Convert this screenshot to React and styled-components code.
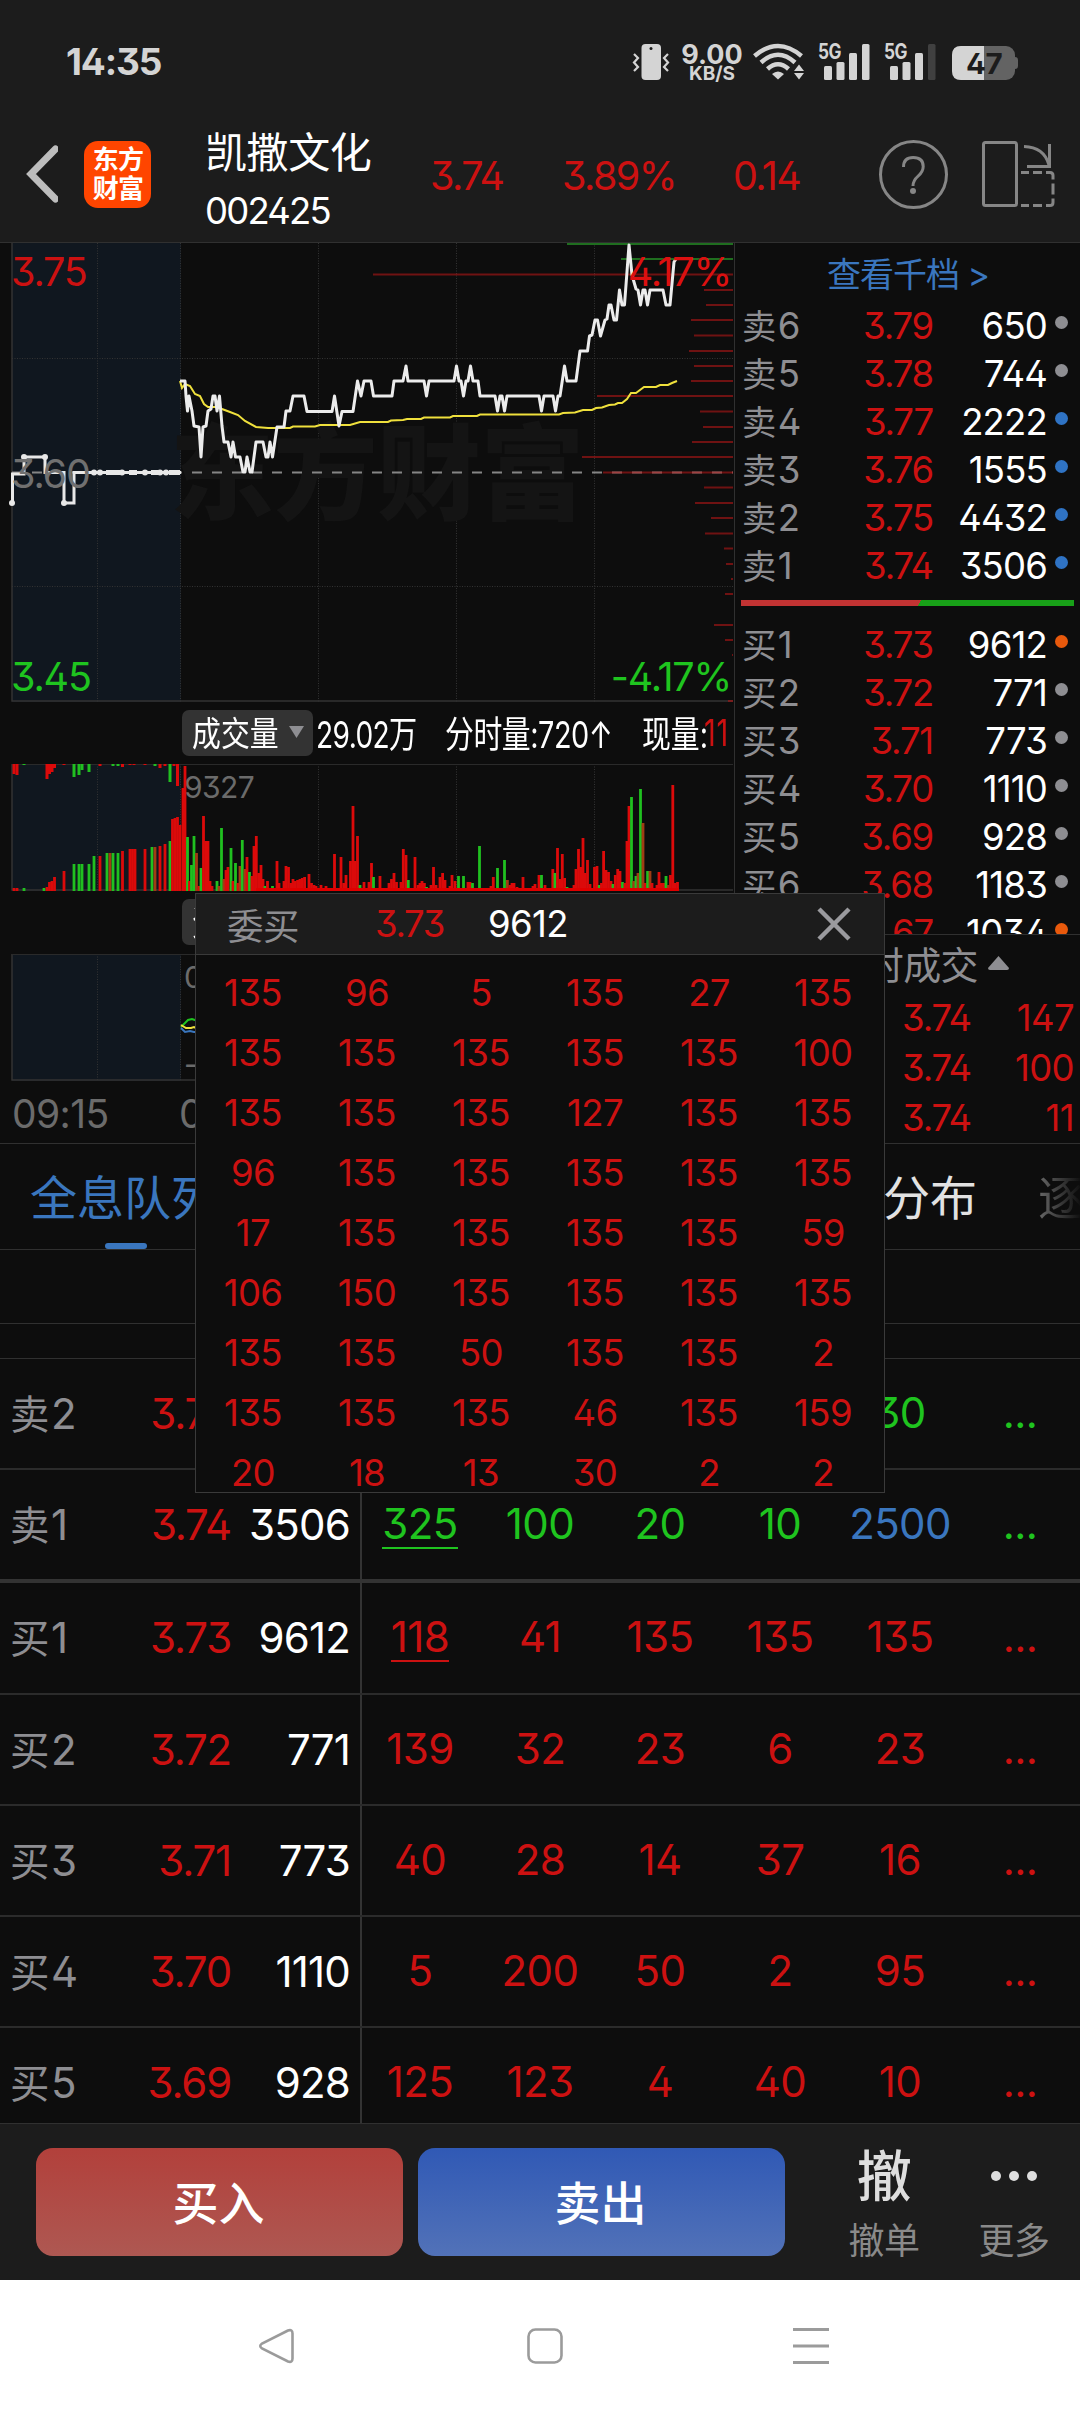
import styled, { createGlobalStyle } from 'styled-components';

const RED = '#cc1111';
const GREEN = '#1fc41f';
const BLUE = '#3a76be';
const GREY = '#8e8e92';
const LINE = '#303030';
const PANEL = '#1c1c1c';

const GlobalStyle = createGlobalStyle`
  * {
    box-sizing: border-box;
  }

  body {
    margin: 0;
    background: #0d0d0d;
    color: #fff;
    font-family: Inter, "Noto Sans CJK SC", sans-serif;
    font-weight: 370;
    font-feature-settings: "cv02", "cv09";
    letter-spacing: -0.6px;
    white-space: nowrap;
  }

  svg {
    display: block;
    flex: none;
  }
`

const Screen = styled.div`
  position: relative;
  width: 1080px;
  height: 2412px;
  overflow: hidden;
  display: flex;
  flex-direction: column;
`

/* status bar */

const StatusBar = styled.div`
  display: flex;
  align-items: center;
  height: 124px;
  padding: 0 61px 0 66px;
  background: ${PANEL};
`

const Clock = styled.span`
  margin-right: auto;
  color: #d4d4d4;
  font-size: 37px;
  font-weight: 650;
  letter-spacing: -0.03em;
`

const NetSpeed = styled.div`
  width: 62px;
  margin: 2px 10px 0 11px;
  color: #d4d4d4;
  font-weight: 650;
  font-size: 27px;
  line-height: 21px;
  text-align: center;
  letter-spacing: 0;
  font-feature-settings: normal;
`

const SpeedUnit = styled.div`
  font-size: 19px;
  line-height: 17px;
`

/* header */

const Header = styled.div`
  display: flex;
  align-items: center;
  height: 119px;
  padding: 0 0 17px 24px;
  background: ${PANEL};
  border-bottom: 1px solid ${LINE};
`

const Logo = styled.div`
  width: 67px;
  height: 67px;
  margin: 0 54px 0 26px;
  padding: 4px 0 0 1px;
  border-radius: 14px;
  background: #ff4500;
  font-size: 26px;
  font-weight: 700;
  line-height: 29px;
  text-align: center;
  letter-spacing: -0.03em;
`

const StockName = styled.div`
  align-self: flex-start;
  width: 225px;
  height: 102px;
  padding-top: 6px;
  font-size: 42px;
  line-height: 46px;
  letter-spacing: -0.01em;
`

const StockCode = styled.div`
  font-size: 36.5px;
  line-height: 66px;
  margin-top: 2px;
  letter-spacing: -0.05em;
`

const Quote = styled.span`
  width: ${props => props.$width}px;
  margin-top: 4px;
  color: ${RED};
  font-size: 39.5px;
  letter-spacing: -1.6px;
`

/* upper half */

const Market = styled.div`
  display: flex;
  height: 901px;
  border-bottom: 1px solid ${LINE};
`

const Charts = styled.div`
  width: 735px;
  border-right: 1px solid ${LINE};
`

const IndicatorBar = styled.div`
  display: flex;
  align-items: center;
  height: ${props => props.$height}px;
  padding-left: 182px;
`

const Picker = styled.div`
  display: flex;
  align-items: center;
  width: 131px;
  height: 46px;
  padding: 0 0 2px 10px;
  margin-right: 3px;
  border-radius: 7px;
  background: #333;
  overflow: hidden;
`

const Narrow = styled.span`
  flex: none;
  width: ${props => props.$width}px;
  margin-top: -1px;
  color: ${props => props.$color || '#fff'};
  font-size: ${props => props.$size || 37}px;
  letter-spacing: ${props => props.$spacing || 0}px;
  transform: scaleX(${props => props.$scale});
  transform-origin: left center;
`

const TimeAxis = styled.div`
  display: flex;
  align-items: center;
  height: 65px;
  padding-left: 12px;
  color: #6b6b6b;
  font-size: 39px;
`

const TimeMark = styled.span`
  width: 167px;
`

const Book = styled.div`
  flex: 1;
  display: flex;
  flex-direction: column;
`

const Levels = styled.div`
  flex: none;
  height: 692px;
  overflow: hidden;
  border-bottom: 1px solid ${LINE};
`

const MoreLevels = styled.div`
  height: 59px;
  padding-top: 2px;
  padding-left: 92px;
  color: ${BLUE};
  font-size: 34px;
  line-height: 60px;
  letter-spacing: -0.03em;
`

const LevelRow = styled.div`
  display: grid;
  grid-template-columns: 90px 101px 114px 1fr;
  align-items: center;
  height: 48px;
  padding-left: 7px;
  font-size: 36.5px;
`

const LevelName = styled.span`
  margin-top: -3px;
  color: ${GREY};
`

const Cjk = styled.span`
  margin-right: 2px;
  font-size: 0.94em;
`

const Price = styled.span`
  color: ${RED};
  text-align: right;
  letter-spacing: -1.2px;
`

const Amount = styled.span`
  text-align: right;
  letter-spacing: -0.8px;
`

const Dot = styled.i`
  width: 13px;
  height: 13px;
  margin: -6px 0 0 8px;
  border-radius: 50%;
  background: ${props => props.$color};
`

const Ratio = styled.div`
  height: 6px;
  margin: 10px 6px 15px;
  background: linear-gradient(120deg, #c23333 53.5%, #18a018 53.6%);
`

const TradesHead = styled.div`
  display: flex;
  align-items: center;
  justify-content: flex-end;
  gap: 10px;
  height: 59px;
  padding: 0 71px 2px 0;
  color: ${GREY};
  font-size: 38px;
`

const TradeRow = styled.div`
  display: grid;
  grid-template-columns: 236px 1fr;
  align-items: center;
  height: 51px;
  padding-right: 6px;
  color: ${RED};
  font-size: 36.5px;
  text-align: right;
`

/* queue table */

const Tabs = styled.div`
  display: flex;
  align-items: center;
  height: 106px;
  padding-left: 30px;
  border-bottom: 1px solid ${LINE};
  font-size: 47px;
  letter-spacing: 0;
  overflow: hidden;
`

const Tab = styled.div`
  position: relative;
  line-height: 113px;
  padding-top: 2px;
  color: ${props => (props.$active ? BLUE : '#e2e2e2')};
  margin-left: ${props => (props.$push ? 'auto' : 0)};

  &::after {
    content: '';
    display: ${props => (props.$active ? 'block' : 'none')};
    position: absolute;
    left: 75px;
    bottom: 5px;
    width: 42px;
    height: 6px;
    border-radius: 3px;
    background: ${BLUE};
  }
`

const FadedTab = styled.div`
  width: 42px;
  margin-left: 61px;
  padding-top: 2px;
  line-height: 113px;
  overflow: hidden;
  background: linear-gradient(90deg, #686868, #111);
  background-clip: text;
  color: transparent;
`

const Spacer = styled.div`
  height: ${props => props.$height}px;
  border-bottom: 1px solid ${LINE};
`

const QueueTable = styled.div`
  height: 765px;
  overflow: hidden;
`

const QueueRow = styled.div`
  display: grid;
  grid-template-columns: 100px 131px 119px 12px repeat(6, 120px);
  align-items: center;
  height: ${props => (props.$last ? 113.4 : 111.2)}px;
  border-bottom: ${props => (props.$last ? 4 : 2)}px solid ${props => (props.$last ? '#333' : '#2b2b2b')};
  font-size: 42px;
`

const QueueName = styled.span`
  margin-top: -4px;
  padding-left: 10px;
  color: ${GREY};
  font-size: 42px;
`

const Divider = styled.i`
  height: 100%;
  border-right: 2px solid #333;
`

const QueueCell = styled.span`
  justify-self: center;
  margin: 1px 4px 0 0;
  line-height: 46px;
  color: ${props => props.$color};
  border-bottom: 2px solid ${props => (props.$marked ? props.$color : 'transparent')};
`

/* order popup */

const Popup = styled.div`
  position: absolute;
  left: 195px;
  top: 893px;
  width: 690px;
  height: 600px;
  border: 1px solid #3a3a3a;
  background: #0d0d0d;
`

const PopupHead = styled.div`
  display: flex;
  align-items: center;
  height: 61px;
  padding: 0 33px 0 31px;
  background: ${PANEL};
  border-bottom: 1px solid #3a3a3a;
  font-size: 36.5px;
`

const PopupTitle = styled.span`
  width: 148px;
  color: ${GREY};
`

const PopupPrice = styled.span`
  width: 113px;
  color: ${RED};
  letter-spacing: -1.4px;
`

const PopupAmount = styled.span`
  margin-right: auto;
`

const Orders = styled.div`
  display: grid;
  grid-template-columns: repeat(6, 114px);
  grid-auto-rows: 60px;
  align-items: center;
  padding-top: 8px;
  color: ${RED};
  font-size: 36.5px;
  text-align: center;
`

/* bottom */

const ActionBar = styled.div`
  display: flex;
  align-items: center;
  height: 157px;
  padding-left: 36px;
  border-top: 1px solid ${LINE};
  background: ${PANEL};
`

const TradeButton = styled.button`
  width: 367px;
  height: 108px;
  margin: 0 15px 0 0;
  padding: 0 2px 5px 0;
  border: 0;
  border-radius: 17px;
  background: linear-gradient(${props => props.$from}, ${props => props.$to});
  color: #fff;
  font: 500 46px "Noto Sans CJK SC", sans-serif;
`

const Action = styled.div`
  display: flex;
  flex-direction: column;
  align-items: center;
  width: 130px;
  height: 120px;
  margin-left: ${props => props.$offset || 0}px;
  color: #8a8a8a;
  font-size: 36px;
  line-height: 66px;
`

const ActionIcon = styled.div`
  flex: none;
  display: flex;
  align-items: center;
  height: 66px;
  padding-top: 2px;
  color: #dedede;
  font-size: 55px;
  font-weight: 500;
`

const NavBar = styled.div`
  display: flex;
  align-items: center;
  height: 132px;
  padding-left: 257px;
  background: #fff;
`

const preTop = [
  [14, 10, 'r'], [17, 11, 'r'], [24, 1, 'g'], [47, 15, 'r'], [49.5, 10, 'r'], [52, 8, 'r'], [54.5, 4, 'r'], [64, 1, 'r'],
  [74, 13, 'g'], [79, 11, 'g'], [82, 6, 'g'], [89, 8, 'g'], [100, 2, 'r'], [113, 2, 'g'], [118, 2, 'g'], [122.5, 3, 'r'],
  [130, 1, 'r'], [134, 1, 'r'], [145, 1, 'r'], [155, 2, 'g'], [160, 4, 'r'], [165, 2, 'r'], [170, 18, 'g'], [174, 2, 'r'], [177.5, 22, 'r'],
];

const preBottom = [
  [14, 3, 'r'], [17, 3, 'r'], [24, 3, 'g'], [44, 3, 'g'], [47, 4, 'r'], [49.5, 9, 'r'], [52, 10, 'r'], [54.5, 14, 'r'], [64, 20, 'r'],
  [74, 27, 'g'], [79, 27, 'g'], [82, 27, 'g'], [89, 27, 'g'], [94, 35, 'g'], [100, 35, 'r'], [107, 38, 'g'], [110, 38, 'm'],
  [113, 38, 'g'], [118, 38, 'g'], [122.5, 40, 'r'], [130, 42, 'r'], [132.5, 42, 'r'], [135, 42, 'r'], [145, 42, 'r'], [152, 44, 'g'],
  [155, 44, 'm'], [160, 45, 'r'], [165, 47, 'r'], [170, 50, 'g'], [172.5, 72, 'r'], [175, 73, 'r'], [177.5, 74, 'r'], [180, 66, 'r'],
];

const volume = [
  [183, 103, 'r'], [185, 125, 'r'], [187.5, 54, 'g'], [189.5, 10, 'r'], [191.5, 26, 'g'], [194, 55, 'g'], [196.5, 38, 'm'], [199, 5, 'r'],
  [201, 23, 'g'], [203.5, 75, 'r'], [205.7, 50, 'r'], [208, 50, 'r'], [210, 10, 'r'], [212, 5, 'r'], [217, 10, 'g'], [219, 5, 'm'],
  [221.5, 63, 'g'], [224, 12, 'm'], [226, 21, 'r'], [228, 24, 'r'], [231, 43, 'g'], [233, 10, 'r'], [235.5, 28, 'g'], [238, 8, 'r'],
  [240, 25, 'm'], [242.3, 51, 'g'], [245, 22, 'm'], [247, 34, 'r'], [249.5, 19, 'g'], [252, 15, 'r'], [254, 45, 'r'], [256.3, 55, 'r'],
  [258.6, 18, 'r'], [261, 26, 'r'], [263, 12, 'r'], [265, 5, 'g'], [267.5, 10, 'r'], [272.5, 5, 'g'], [277, 30, 'r'], [279, 8, 'r'],
  [284, 10, 'r'], [286, 25, 'r'], [288.5, 24, 'r'], [291, 8, 'r'], [293, 12, 'r'], [295.3, 10, 'r'], [297.6, 11, 'r'], [300, 12, 'r'],
  [302.3, 13, 'r'], [304.6, 14, 'r'], [307, 3, 'g'], [309, 17, 'r'], [311.5, 8, 'r'], [314, 6, 'r'], [316, 5, 'r'], [321, 6, 'r'],
  [326, 5, 'r'], [334.5, 37, 'r'], [337.5, 3, 'g'], [341, 34, 'r'], [343.7, 8, 'r'], [346, 16, 'r'], [350.5, 30, 'r'], [353, 85, 'r'],
  [355, 30, 'r'], [357.5, 55, 'r'], [360, 6, 'g'], [364, 9, 'r'], [369, 9, 'r'], [371.5, 28, 'r'], [373.5, 14, 'g'], [380, 15, 'r'],
  [389, 8, 'r'], [391.5, 12, 'r'], [394, 18, 'r'], [396.5, 9, 'r'], [401, 9, 'r'], [403.3, 42, 'r'], [406, 36, 'r'], [408.3, 11, 'g'],
  [415, 34, 'r'], [418, 6, 'r'], [420, 8, 'r'], [422, 10, 'r'], [424.4, 8, 'r'], [426.5, 4, 'g'], [431, 6, 'r'], [433.5, 24, 'r'],
  [436, 6, 'r'], [440, 14, 'r'], [442.6, 18, 'r'], [445, 11, 'r'], [450, 5, 'r'], [452, 16, 'r'], [455, 10, 'r'], [458.5, 15, 'g'],
  [463.5, 15, 'g'], [468, 9, 'r'], [470, 9, 'r'], [472.5, 8, 'g'], [479.5, 45, 'g'], [491, 5, 'r'], [493.3, 14, 'r'], [497.5, 23, 'g'],
  [504.5, 31, 'g'], [507.4, 11, 'm'], [510, 6, 'r'], [512, 8, 'r'], [514, 8, 'r'], [517, 4, 'r'], [523, 14, 'r'], [533, 5, 'r'],
  [535, 7, 'r'], [539, 16, 'r'], [541.5, 16, 'g'], [545, 6, 'r'], [552.8, 22, 'r'], [555, 18, 'g'], [557.5, 43, 'r'], [560, 12, 'r'],
  [562.3, 37, 'r'], [564.6, 13, 'r'], [567, 4, 'g'], [574, 6, 'r'], [576, 22, 'r'], [578.5, 42, 'r'], [580.8, 24, 'r'], [583, 53, 'r'],
  [585, 18, 'r'], [587.5, 31, 'r'], [590, 7, 'r'], [594.5, 24, 'r'], [597, 25, 'r'], [599.3, 6, 'g'], [601.5, 8, 'r'], [603.6, 40, 'r'],
  [606, 21, 'r'], [608.5, 19, 'r'], [611, 10, 'r'], [613, 7, 'g'], [615.3, 16, 'r'], [617.7, 22, 'r'], [620, 20, 'r'], [622.5, 9, 'g'],
  [625, 8, 'r'], [627, 50, 'r'], [629, 85, 'r'], [631.5, 94, 'g'], [633.8, 10, 'm'], [636, 15, 'g'], [638, 18, 'm'], [640.5, 102, 'g'],
  [643, 68, 'm'], [645.3, 8, 'r'], [647.6, 20, 'g'], [650, 20, 'm'], [652, 8, 'r'], [657, 6, 'r'], [659, 19, 'r'], [661.4, 8, 'r'],
  [663.5, 8, 'r'], [666, 15, 'g'], [668.3, 6, 'm'], [670.5, 16, 'r'], [672.8, 106, 'r'], [675, 8, 'r'], [677.5, 9, 'r'],
];

const barColors = { r: '#dc0a0a', g: '#20c020', m: '#a03c14' };

// price distribution: [y, left end]
const priceBars = [
  [274.5, 373], [290, 704], [305, 706], [320, 691], [335.5, 694], [351, 689], [366, 694], [381, 691], [396, 597],
  [411.5, 700], [427, 703], [442, 692], [457, 582], [472.5, 603], [487.5, 704], [503, 695], [518, 711], [533.5, 705],
  [548.5, 724], [564, 726], [579, 731], [594, 725], [625, 714], [640, 725], [655, 732], [701, 728],
];

const pricePath = 'M180 381L185 381 186 396 187.5 411 189 396 192 411 194 426 199 427 201 457 203 427 206 426 208 411 211 409 213 396 215 396 217 411 219.5 396 222 426 224 442 228 442 231 457 233 442 235.5 457 240 457 243 472 245 472 247 457 250 472 252 472 256 442 263 442 266 457 268 457 270 442 272.5 457 277 427 284 427 286 411 290 411 293 396 304 396 307 411.5 332 411.5 334.5 396 339 426 342 411.5 353 411.5 357.5 381 361 396 364 381 371 381 373.5 396 392 396 394 381 403 381 406 366 408 381 424 381 426.5 396 429 381 454 381 456.5 366 459 381 461 381 463.5 396 466 381 468 381 470.5 366 473 381 478 381 480 396 495 396 497.5 411 500 396 502 396 504.5 411 507 396 539 396 541.5 411 544 396 553 396 555.5 411 558 396 560 396 564.5 366 567 381 576 381 580 351 587.5 351 589.5 336 592 335 595 320 597.5 320 600.5 336 605 320 607 319 609 305 611 305 614 320 616.5 320 619.5 290 622 305 624.5 305 629 245 632 275 636 289 638 290 640.5 305 643 290 645 290 647.5 305 650 290 663 290 666 305 670 305 674 262 676 259';

const averagePath = 'M180 381L182 388 185 384 190 386 195 394 200 396 204 404 208 407 216 407 222 409 230 412 238 415 245 421 256 427 268 428 290 428 293 426.5 315 426.5 320 425 350 425 360 422 388 422 391 420.5 403 420 407 419 421 419 424 417.5 450 417.5 453 416 477 416 480 414.5 559 414.5 563 413 575 412.5 583 410 592 410 596 408 602 407.5 609 405 615 404.5 618 403 622 403 627 399 631 393 636 393 644 387 656 387 660 385 668 385 672 383 677 381';

const auctionDots = [[12, 503], [24, 457], [45, 457], [64, 503], [94, 472.5], [100, 472.5], [122, 472.5], [145, 472.5], [160, 472.5], [166, 472.5]];

const sells = [
  [6, '3.79', 650, '#8e8e92'],
  [5, '3.78', 744, '#8e8e92'],
  [4, '3.77', 2222, '#2f73c4'],
  [3, '3.76', 1555, '#2f73c4'],
  [2, '3.75', 4432, '#2f73c4'],
  [1, '3.74', 3506, '#2f73c4'],
];

const buys = [
  [1, '3.73', 9612, '#e8590c'],
  [2, '3.72', 771, '#8e8e92'],
  [3, '3.71', 773, '#8e8e92'],
  [4, '3.70', 1110, '#8e8e92'],
  [5, '3.69', 928, '#8e8e92'],
  [6, '3.68', 1183, '#8e8e92'],
  [7, '3.67', 1034, '#e8590c'],
];

const trades = [147, 100, 11];

const queue = [
  { side: '卖', level: 2, price: '3.75', amount: 4432, orders: ['', '', '', '', 30] },
  { side: '卖', level: 1, price: '3.74', amount: 3506, orders: [325, 100, 20, 10, 2500] },
  { side: '买', level: 1, price: '3.73', amount: 9612, orders: [118, 41, 135, 135, 135] },
  { side: '买', level: 2, price: '3.72', amount: 771, orders: [139, 32, 23, 6, 23] },
  { side: '买', level: 3, price: '3.71', amount: 773, orders: [40, 28, 14, 37, 16] },
  { side: '买', level: 4, price: '3.70', amount: 1110, orders: [5, 200, 50, 2, 95] },
  { side: '买', level: 5, price: '3.69', amount: 928, orders: [125, 123, 4, 40, 10] },
];

const popupOrders = [
  135, 96, 5, 135, 27, 135,
  135, 135, 135, 135, 135, 100,
  135, 135, 135, 127, 135, 135,
  96, 135, 135, 135, 135, 135,
  17, 135, 135, 135, 135, 59,
  106, 150, 135, 135, 135, 135,
  135, 135, 50, 135, 135, 2,
  135, 135, 135, 46, 135, 159,
  20, 18, 13, 30, 2, 2,
];

const StatusIcons = () => (
  <>
    <svg width="38" height="40" viewBox="633 42 38 40">
      <rect x="642.5" y="44" width="19.5" height="36" rx="4" fill="#d4d4d4" />
      <circle cx="652" cy="48.5" r="1.5" fill={PANEL} />
      <path d="M635 54l4 4-4 4.500 4 4.500-4 4M669 54l-4 4 4 4.500-4 4.500 4 4" fill="none" stroke="#d4d4d4" strokeWidth="2.200" />
    </svg>
    <NetSpeed>
      9.00
      <SpeedUnit>KB/S</SpeedUnit>
    </NetSpeed>
    <svg width="266" height="40" viewBox="753 42 266 40">
      <g fill="none" stroke="#d4d4d4" strokeWidth="4.500">
        <path d="M754.500 56Q778 36 801.500 56" />
        <path d="M761 62.500Q778 47 795 62.500" />
        <path d="M767.500 69Q778 59.500 788.500 69" />
      </g>
      <path d="M772 74q6-5 12 0l-6 5.500z" fill="#d4d4d4" />
      <path d="M794 71l5-6.500 5 6.500zM794 73l5 6.500 5-6.500z" fill="#d4d4d4" />
      {[818, 884].map(x => (
        <g key={x} fill="#d4d4d4">
          <text x={x} y="58.500" fontSize="21" fontWeight="700" textLength="23" lengthAdjust="spacingAndGlyphs">5G</text>
          <rect x={x + 6} y="66" width="8" height="14" rx="1.500" />
          <rect x={x + 18.500} y="62" width="8" height="18" rx="1.500" />
          <rect x={x + 31} y="53" width="8" height="27" rx="1.500" />
          <rect x={x + 44} y="44" width="7.500" height="36" rx="1.500" fill={x === 884 ? '#404040' : '#d4d4d4'} />
        </g>
      ))}
      <rect x="952" y="46" width="63" height="34" rx="9" fill="#636363" />
      <path d="M1015 57q3 0 3 3v6q0 3-3 3z" fill="#636363" />
      <path d="M984 46h-23q-9 0-9 9v16q0 9 9 9h23z" fill="#d4d4d4" />
      <text x="966" y="74" fontSize="29" fontWeight="700" textLength="36" lengthAdjust="spacingAndGlyphs" fill={PANEL}>47</text>
    </svg>
  </>
);

const Grid = ({ top, bottom }) => (
  <>
    <rect x="12" y={top} width="169" height={bottom - top} fill="#10171f" />
    <g stroke="#333" strokeWidth="1" strokeDasharray="1 1.500">
      {[97.5, 180.5, 318.5, 456.5, 594.5].map(x => (
        <line key={x} x1={x} x2={x} y1={top} y2={bottom} />
      ))}
    </g>
    <path d={`M12 ${top}V${bottom - 1}H733`} fill="none" stroke="#333" strokeWidth="1.500" />
  </>
);

const PriceChart = () => (
  <svg width="734" height="459" viewBox="0 243 734 459">
    <Grid top={243} bottom={702} />
    <path d="M12 358.500H733M12 586.500H733" stroke="#333" strokeDasharray="1 1.500" />
    <text x="170" y="512" fontSize="104" fontWeight="900" fill="#141414" letterSpacing="-0.500">东方财富</text>
    <path d="M12 472.500H733" stroke="#858585" strokeWidth="2" strokeDasharray="10 10" />
    <g stroke="#b01616" strokeOpacity="0.6" strokeWidth="2">
      {priceBars.map(([y, x]) => (
        <line key={y} x1={x} x2="733" y1={y} y2={y} />
      ))}
    </g>
    <path d="M567 244H733M621 259H733" stroke="#1f6e1f" strokeWidth="2" />
    <path d={averagePath} fill="none" stroke="#efe03c" strokeWidth="2" />
    <path d={pricePath} fill="none" stroke="#ececec" strokeWidth="3" strokeLinejoin="round" />
    <path d="M12.500 503V474H24V457H45V472.500H64V503H74V472.500H181" fill="none" stroke="#e8e8e8" strokeWidth="3" />
    <path d="M106 472.500H120M129 472.500H137M151 472.500H158M169 472.500H180" stroke="#e8e8e8" strokeWidth="5" />
    {auctionDots.map(([x, y]) => (
      <circle key={x} cx={x} cy={y} r="3" fill="#e8e8e8" />
    ))}
    <g fontSize="39.500" letterSpacing="-1.200">
      <text x="11" y="285.500" fill={RED}>3.75</text>
      <text x="11" y="487.500" fill="#707070">3.60</text>
      <text x="11" y="691" fill={GREEN}>3.45</text>
      <text x="731" y="285.500" textAnchor="end" fill="#dc1010">4.17%</text>
      <text x="731" y="691" textAnchor="end" fill={GREEN}>-4.17%</text>
    </g>
  </svg>
);

const VolumeChart = () => (
  <svg width="734" height="127" viewBox="0 764 734 127">
    <Grid top={764} bottom={891} />
    <path d="M12 764.500H733" stroke="#2a2a2a" />
    <text x="184" y="798" fontSize="30" fill="#6b6b6b">9327</text>
    {preTop.map(([x, height, tone]) => (
      <rect key={x} x={x - 1.500} y="764" width="3" height={height} fill={barColors[tone]} />
    ))}
    {preBottom.concat(volume).map(([x, height, tone]) => (
      <rect key={x} x={x - 1.400} y={891 - height} width="2.800" height={height} fill={barColors[tone]} />
    ))}
    <rect x="256" y="888" width="423" height="3" fill="#e00000" />
  </svg>
);

const FundsChart = () => (
  <svg width="734" height="127" viewBox="0 954 734 127">
    <Grid top={954} bottom={1081} />
    <path d="M12 954.500H733" stroke="#2a2a2a" />
    <g fill="none" strokeWidth="2">
      <path d="M181 1027l4-4 3-3 4-1 6 2" stroke={GREEN} />
      <path d="M181 1025l5 3h5l3-1 4 2" stroke="#efe03c" />
      <path d="M181 1028l4 4 5-1 4 1h4" stroke={BLUE} />
    </g>
    <text x="184" y="987.500" fontSize="30" fill="#6b6b6b">0.00</text>
    <text x="184" y="1075" fontSize="30" fill="#6b6b6b">-0.01</text>
  </svg>
);

const Level = ({ side, row }) => {
  const [level, price, amount, color] = row;

  return (
    <LevelRow>
      <LevelName><Cjk>{side}</Cjk>{level}</LevelName>
      <Price>{price}</Price>
      <Amount>{amount}</Amount>
      <Dot $color={color} />
    </LevelRow>
  )
}

const Queue = ({ row }) => {
  const isSell = row.side === '卖';
  const base = isSell ? GREEN : RED;

  return (
    <QueueRow $last={isSell && row.level === 1}>
      <QueueName><Cjk>{row.side}</Cjk>{row.level}</QueueName>
      <Price>{row.price}</Price>
      <Amount>{row.amount}</Amount>
      <Divider />
      {row.orders.map((order, index) => (
        <QueueCell
          key={index}
          $color={order >= 1000 ? BLUE : base}
          $marked={index === 0 && row.level === 1}
        >
          {order}
        </QueueCell>
      ))}
      <QueueCell $color={base}>...</QueueCell>
    </QueueRow>
  )
}

const App = () => (
  <Screen>
    <GlobalStyle />
    <StatusBar>
      <Clock>14:35</Clock>
      <StatusIcons />
    </StatusBar>
    <Header>
      <svg width="34" height="60" viewBox="0 0 34 60">
        <path d="M31.500 5L7 30l24.500 25" fill="none" stroke="#bdbdbd" strokeWidth="7" strokeLinecap="round" />
      </svg>
      <Logo>东方<br />财富</Logo>
      <StockName>
        凯撒文化
        <StockCode>002425</StockCode>
      </StockName>
      <Quote $width={132}>3.74</Quote>
      <Quote $width={171}>3.89%</Quote>
      <Quote $width={144}>0.14</Quote>
      <svg width="180" height="72" viewBox="877 138 180 72" fill="none" stroke="#868686" strokeWidth="3">
        <circle cx="913.500" cy="174.500" r="33" />
        <path d="M903.500 167q0-9.500 9.700-9.500 10 0 10 9 0 5-5 9.500-5.200 4.500-5.200 10" />
        <circle cx="913" cy="191" r="3" fill="#868686" stroke="none" />
        <rect x="983.500" y="142.500" width="33" height="63" rx="2" />
        <path d="M1024 146.500Q1044 147 1049 165M1049.500 144V166.500H1027" />
        <path d="M1021 172.500h8m4 0h9m4 0h4q3 0 3 3v4m0 4v11m0 4v4q0 3-3 3h-4m-4 0h-9m-4 0h-8" />
      </svg>
    </Header>
    <Market>
      <Charts>
        <PriceChart />
        <IndicatorBar $height={62}>
          <Picker>
            <Narrow $width={97} $size={34} $scale={0.85}>成交量</Narrow>
            <svg width="16" height="12" viewBox="0 0 16 12">
              <path d="M0 0h15L7.500 12z" fill="#8e8e92" />
            </svg>
          </Picker>
          <Narrow $width={129} $scale={0.76} $spacing={-0.8}>29.02万</Narrow>
          <Narrow $width={197} $scale={0.78} $spacing={-0.6}>分时量:720↑</Narrow>
          <Narrow $width={62} $scale={0.78}>现量:</Narrow>
          <Narrow $width={30} $scale={0.78} $spacing={1} $color={RED}>11</Narrow>
        </IndicatorBar>
        <VolumeChart />
        <IndicatorBar $height={63}>
          <Picker>
            <Narrow $width={96} $size={34} $scale={0.85}>资金博弈</Narrow>
          </Picker>
        </IndicatorBar>
        <FundsChart />
        <TimeAxis>
          <TimeMark>09:15</TimeMark>
          <TimeMark>09:30</TimeMark>
        </TimeAxis>
      </Charts>
      <Book>
        <Levels>
          <MoreLevels>查看千档 &gt;</MoreLevels>
          {sells.map(row => <Level key={row[0]} side="卖" row={row} />)}
          <Ratio />
          {buys.map(row => <Level key={row[0]} side="买" row={row} />)}
        </Levels>
        <TradesHead>
          分时成交
          <svg width="21" height="14" viewBox="0 0 21 14">
            <path d="M10.500 0L21 12q0 2-2 2H2q-2 0-2-2z" fill="#8e8e92" />
          </svg>
        </TradesHead>
        {trades.map(amount => (
          <TradeRow key={amount}>
            <Price>3.74</Price>
            <span>{amount}</span>
          </TradeRow>
        ))}
      </Book>
    </Market>
    <Tabs>
      <Tab $active>全息队列</Tab>
      <Tab $push>成交分布</Tab>
      <FadedTab>逐笔</FadedTab>
    </Tabs>
    <Spacer $height={74} />
    <Spacer $height={35} />
    <QueueTable>
      {queue.map(row => <Queue key={row.side + row.level} row={row} />)}
    </QueueTable>
    <ActionBar>
      <TradeButton $from="#b2403b" $to="#ae5852">买入</TradeButton>
      <TradeButton $from="#3059b5" $to="#5272b8">卖出</TradeButton>
      <Action $offset={19}>
        <ActionIcon>撤</ActionIcon>
        撤单
      </Action>
      <Action>
        <ActionIcon>
          <svg width="46" height="10" viewBox="0 0 46 10" fill="#dedede">
            <circle cx="5" cy="5" r="5" />
            <circle cx="23" cy="5" r="5" />
            <circle cx="41" cy="5" r="5" />
          </svg>
        </ActionIcon>
        更多
      </Action>
    </ActionBar>
    <NavBar>
      <svg width="574" height="40" viewBox="257 2326 574 40" fill="none" stroke="#9b9b9b" strokeWidth="2.600">
        <path d="M288 2330.500L262 2343.500q-3.500 2.500 0 5L288 2361.500q4.500 1.500 4.500-3V2333.500q0-4.500-4.500-3z" />
        <rect x="528.500" y="2329.500" width="33" height="33" rx="7" />
        <path d="M793 2329.500h36M793 2346h36M793 2362.500h36" strokeWidth="3" />
      </svg>
    </NavBar>
    <Popup>
      <PopupHead>
        <PopupTitle>委买</PopupTitle>
        <PopupPrice>3.73</PopupPrice>
        <PopupAmount>9612</PopupAmount>
        <svg width="34" height="34" viewBox="0 0 34 34">
          <path d="M2 2l30 30M32 2L2 32" stroke="#9a9a9e" strokeWidth="4.500" />
        </svg>
      </PopupHead>
      <Orders>
        {popupOrders.map((order, index) => <span key={index}>{order}</span>)}
      </Orders>
    </Popup>
  </Screen>
);

export default App;
